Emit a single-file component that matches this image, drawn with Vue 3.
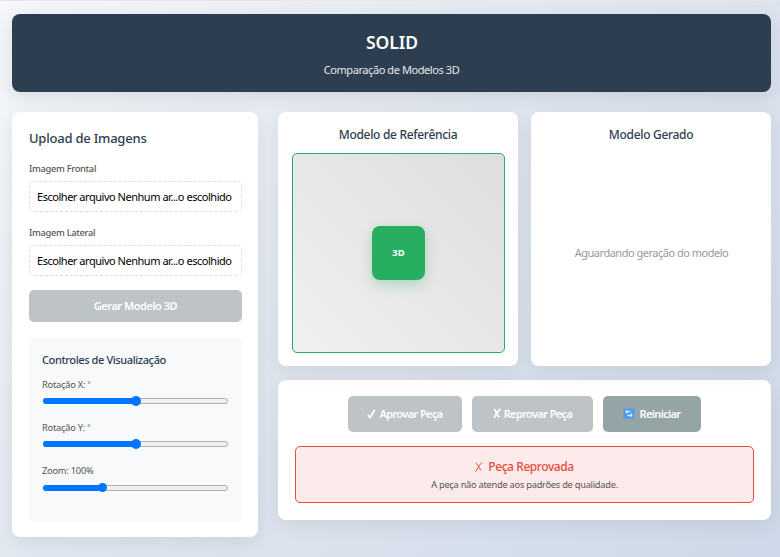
<script setup>
const uploads = [
  { label: 'Imagem Frontal', cls: 'frontal' },
  { label: 'Imagem Lateral', cls: 'lateral' },
]
const sliders = [
  { label: 'Rotação X: ', unit: '°', cls: 'rx', value: 50.4 },
  { label: 'Rotação Y: ', unit: '°', cls: 'ry', value: 50.4 },
  { label: 'Zoom: 100%', unit: '', cls: 'zm', value: 32.3 },
]
</script>

<template>
  <div class="page">
    <header class="header">
      <h1><span>SOLID</span></h1>
      <p><span>Comparação de Modelos 3D</span></p>
    </header>
    <main class="main">
      <aside class="card sidebar">
        <h2><span>Upload de Imagens</span></h2>
        <div v-for="u in uploads" :key="u.cls" class="upload">
          <label><span>{{ u.label }}</span></label>
          <div class="file"><span>Escolher arquivo Nenhum ar...o escolhido</span></div>
        </div>
        <button class="btn generate"><span>Gerar Modelo 3D</span></button>
        <section class="controls">
          <h3><span>Controles de Visualização</span></h3>
          <div v-for="s in sliders" :key="s.cls" class="control" :class="s.cls">
            <label>{{ s.label }}<span class="unit">{{ s.unit }}</span></label>
            <div class="range">
              <div class="fill" :style="{ width: s.value + '%' }"></div>
              <div class="thumb"></div>
            </div>
          </div>
        </section>
      </aside>
      <div class="content">
        <div class="viewers">
          <section class="card viewer">
            <h3><span>Modelo de Referência</span></h3>
            <div class="preview"><div class="cube"><span>3D</span></div></div>
          </section>
          <section class="card viewer">
            <h3><span>Modelo Gerado</span></h3>
            <div class="waiting"><span>Aguardando geração do modelo</span></div>
          </section>
        </div>
        <section class="card decision">
          <div class="actions">
            <button class="btn approve">
              <svg width="9" height="10" viewBox="0 0 9 10"><path d="M.9 5.7 3 8.5 7.8.8" fill="none" stroke="#fff" stroke-width="1.8" /></svg>
              <span>Aprovar Peça</span>
            </button>
            <button class="btn reject">
              <svg width="8" height="11" viewBox="0 0 8 11"><path d="M1.3 1.2C3 3 4 6.5 6.2 9.2M7.2.8C4.500 3.500 2.500 6.500 1.200 10" fill="none" stroke="#fff" stroke-width="1.800" /></svg>
              <span>Reprovar Peça</span>
            </button>
            <button class="btn reset">
              <svg width="12" height="11" viewBox="0 0 12 11"><rect x=".5" y=".4" width="11" height="10.200" rx="1" fill="#4d9bf5" /><path d="M3.800 5.600Q3.800 3.500 6 3.500H7.500M8.300 5.400Q8.300 7.500 6 7.500H4.600" fill="none" stroke="#fff" stroke-width="1" /><path d="M2.800 2.500H5.200L2.800 5ZM9.200 8.500H6.800L9.200 6Z" fill="#fff" /></svg>
              <span>Reiniciar</span>
            </button>
          </div>
          <div class="alert">
            <h4>
              <svg width="8" height="10" viewBox="0 0 8 10"><path d="M1.2.8C3 3 4 6 6 8.7M7.2.4C4.5 3 2.5 6 .9 9.5" fill="none" stroke="#e74c3c" stroke-width="1" /></svg>
              <span>Peça Reprovada</span>
            </h4>
            <p><span>A peça não atende aos padrões de qualidade.</span></p>
          </div>
        </section>
      </div>
    </main>
  </div>
</template>

<style>
body { margin: 0; overflow: hidden; }
</style>

<style scoped>
* { box-sizing: border-box; margin: 0; }
.page {
  height: 557px;
  padding: 13px 9px 0 12px;
  border-top: 1px solid #e7e7e7;
  background: linear-gradient(135deg, #f5f7fa 0%, #e1e7f0 45%, #cdd8e8 100%);
  font-family: "Noto Sans", "Open Sans", sans-serif;
  color: #2c3e50;
}
span { white-space: nowrap; }
h1, h2, h3, h4 { font-weight: 500; }
.header {
  height: 78px;
  padding-top: 16px;
  border-radius: 8px;
  background: #2c3e50;
  color: #fff;
  text-align: center;
  box-shadow: 0 5px 20px rgba(0, 0, 0, .1);
}
.header h1 { padding-left: 1px; font-size: 17.5px; line-height: 24px; font-weight: 600; }
.header p { margin-top: 6px; font-size: 11px; line-height: 20px; letter-spacing: -.42px; color: #e6e8ea; }
.main { display: flex; gap: 20px; align-items: flex-start; margin-top: 20px; }
.card { background: #fff; border-radius: 8px; box-shadow: 0 5px 20px rgba(0, 0, 0, .08); }
.sidebar { width: 246px; height: 425px; padding: 16px 16px 17px 17px; flex: none; }
.sidebar h2 { font-size: 13px; line-height: 20px; margin-bottom: 11px; letter-spacing: -.22px; }
.upload { height: 64px; }
.upload label { display: block; font-size: 9.3px; line-height: 20px; font-weight: 500; letter-spacing: -.3px; color: #555; }
.file {
  display: flex;
  align-items: center;
  height: 31px;
  margin-top: 2px;
  padding-left: 7px;
  border: 1px dashed #ddd;
  border-radius: 5px;
  font-size: 11px;
  letter-spacing: -.47px;
  color: #000;
}
.btn {
  display: flex;
  align-items: center;
  justify-content: center;
  border: 0;
  padding: 0;
  border-radius: 5px;
  background: #bdc3c7;
  color: #fff;
  font-family: inherit;
  font-size: 11px;
  font-weight: 600;
  letter-spacing: -.48px;
}
.generate { width: 213px; height: 32px; margin-top: 3px; padding-bottom: 1px; }
.controls { height: 183px; margin-top: 16px; padding: 12px 14px 0 13px; border-radius: 5px; background: #f8f9fb; }
.controls h3 { font-size: 11px; line-height: 20px; margin-bottom: 5px; letter-spacing: -.39px; }
.control { height: 43.2px; }
.control label { display: block; height: 20px; font-size: 9.3px; line-height: 20px; letter-spacing: -.24px; color: #555; white-space: pre; }
.unit { font-size: 7.5px; vertical-align: 1px; line-height: 1; }
.range {
  display: flex;
  align-items: center;
  width: 185px;
  height: 6px;
  margin: 3px 0 0 .5px;
  border: 1px solid #b2b2b2;
  border-radius: 3px;
  background: #efefef;
}
.fill { flex: none; height: 6px; border-radius: 3px 0 0 3px; margin-left: -1px; background: #0075ff; }
.thumb { flex: none; width: 10px; height: 10px; margin-left: -4px; border-radius: 50%; background: #0075ff; }
.zm .range { margin-top: 3.6px; }
.zm .thumb { width: 9px; height: 9px; }
.content { width: 493px; }
.viewers { display: flex; gap: 13px; }
.viewer { width: 240px; height: 254px; padding: 13px 13px 0 14px; text-align: center; }
.viewer h3 { padding-right: 1px; font-size: 12px; line-height: 20px; letter-spacing: -.31px; }
.preview {
  display: flex;
  align-items: center;
  justify-content: center;
  height: 200px;
  margin-top: 8px;
  border: 1px solid #27ae60;
  border-radius: 5px;
  background: linear-gradient(45deg, #f0f0f0, #dedede);
}
.cube {
  display: flex;
  align-items: center;
  justify-content: center;
  width: 53px;
  height: 54px;
  padding-bottom: 1px;
  border-radius: 8px;
  background: #27ae60;
  color: #fff;
  font-size: 9.5px;
  font-weight: 700;
  box-shadow: 0 5px 13px rgba(39, 174, 96, .3);
}
.waiting { display: flex; align-items: center; justify-content: center; height: 200px; margin-top: 7px; font-size: 11px; letter-spacing: -.49px; color: #999; }
.decision { height: 140px; margin-top: 14px; padding: 16px 17px; }
.actions { display: flex; justify-content: center; gap: 10px; }
.actions .btn { height: 36px; gap: 3px; padding-bottom: 1px; letter-spacing: -.62px; }
.approve { width: 114px; }
.actions .reject { width: 121px; gap: 3px; }
.actions .reset { width: 98px; background: #95a5a6; gap: 4px; }
.alert { height: 57px; margin-top: 14px; padding-top: 10px; border: 1px solid #e74c3c; border-radius: 5px; background: #fdeaea; text-align: center; }
.alert h4 { display: flex; align-items: center; justify-content: center; gap: 5px; font-size: 12px; line-height: 20px; letter-spacing: -.43px; color: #e74c3c; }
.alert p { font-size: 9.3px; line-height: 16px; letter-spacing: -.27px; color: #555; }
</style>
